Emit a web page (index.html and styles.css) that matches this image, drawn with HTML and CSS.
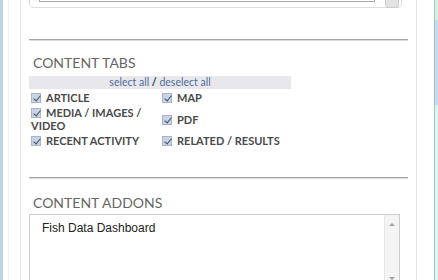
FILE: index.html
```html
<!DOCTYPE html>
<html lang="en">
<head>
    <meta charset="UTF-8">
    <meta name="viewport" content="width=device-width, initial-scale=1.0">
    <title>Content Settings</title>
    <link rel="stylesheet" href="styles.css">
</head>
<body>

    <div class="edge-left"></div>
    <div class="sheet">
        <div class="panel">

            <!-- tail of the box scrolled off the top -->
            <div class="top-box">
                <div class="top-input"></div>
                <div class="top-scroll"></div>
            </div>

            <hr class="divider first">

            <h2>Content Tabs</h2>
            <div class="select-bar">
                <a href="#">select all</a> <b>/</b> <a href="#">deselect all</a>
            </div>

            <div class="tab-grid">
                <label class="tab"><span class="check"></span>ARTICLE</label>
                <label class="tab"><span class="check"></span>MAP</label>
                <label class="tab"><span class="check"></span>MEDIA / IMAGES / VIDEO</label>
                <label class="tab"><span class="check"></span>PDF</label>
                <label class="tab"><span class="check"></span>RECENT ACTIVITY</label>
                <label class="tab"><span class="check"></span>RELATED / RESULTS</label>
            </div>

            <hr class="divider second">

            <h2 class="addons-title">Content Addons</h2>
            <div class="listbox">
                <div class="list-items">
                    <div class="list-item">Fish Data Dashboard</div>
                </div>
                <div class="list-scroll">
                    <span class="arrow up"></span>
                    <span class="arrow down"></span>
                </div>
            </div>

        </div>
    </div>
    <div class="gap-right"></div>
    <div class="edge-right"></div>

</body>
</html>
```

FILE: styles.css
```css
/* Global reset */
* {
    margin: 0;
    padding: 0;
    box-sizing: border-box;
}

body {
    font-family: Lato, "Open Sans", Arial, sans-serif;
    background-color: #ffffff;
    display: flex;
    width: 438px;
    height: 280px;
    overflow: hidden;
}

.edge-left {
    width: 3px;
    background-color: #bcd5e6;
}

.sheet {
    margin-left: 5px;
    border-left: 1px solid #f0f0f0;
    padding-left: 11px;
}

.panel {
    width: 397px;
    height: 280px;
    overflow: hidden;
    border-left: 1px solid #e6e6e6;
    border-right: 1px solid #e6e6e6;
    padding: 0 8px;
}

.gap-right {
    width: 17px;
}

.edge-right {
    width: 4px;
    border-left: 1px solid #8fcaca;
    background: linear-gradient(#dcefe2 0, #dcefe2 20px, #c7daf2 20px, #c7daf2 105px, #e3f2f2 105px);
}

/* top box */
.top-box {
    width: 373px;
    height: 22px;
    margin-top: -14px;
    border: 1px solid #dddddd;
    border-radius: 0 0 4px 4px;
    display: flex;
    align-items: flex-end;
    padding: 0 2px 0 9px;
}

.top-input {
    width: 338px;
    height: 16px;
    margin-bottom: 5px;
    border: 1px solid #a9a9a9;
    border-top: none;
}

.top-scroll {
    width: 14px;
    height: 21px;
    margin-left: 10px;
    margin-bottom: -1px;
    background-color: #e2e2e2;
    border: 1px solid #cccccc;
    border-radius: 0 0 3px 3px;
}

.divider {
    border: none;
    border-top: 1px solid #a3a3a3;
    border-bottom: 1px solid #dcdcdc;
}

    .divider.first {
        margin-top: 31px;
    }

    .divider.second {
        margin-top: 30px;
    }

h2 {
    font-size: 14px;
    font-weight: normal;
    text-transform: uppercase;
    color: #666666;
    line-height: 17px;
    margin-top: 13px;
    padding-left: 4px;
}

    h2.addons-title {
        margin-top: 15px;
    }

.select-bar {
    width: 262px;
    height: 13px;
    margin-top: 5px;
    background-color: #e8e8ec;
    text-align: center;
    font-size: 10.5px;
    line-height: 13px;
    color: #333333;
}

    .select-bar a {
        color: #4c6c9a;
        text-decoration: none;
    }

.tab-grid {
    display: grid;
    grid-template-columns: 131px auto;
    row-gap: 2px;
    align-items: center;
    margin-top: 2px;
    padding-left: 2px;
}

.tab {
    font-size: 11px;
    font-weight: bold;
    color: #4a4a4a;
    line-height: 13px;
    padding-right: 10px;
}

.check {
    display: inline-block;
    width: 10px;
    height: 10px;
    margin-right: 5px;
    vertical-align: -1px;
    background-color: #c9d3e3;
    border: 1px solid #a8b4c8;
    position: relative;
}

    .check::after {
        content: "";
        position: absolute;
        left: 3px;
        top: 0px;
        width: 3px;
        height: 6px;
        border-right: 1.5px solid #3f4f6a;
        border-bottom: 1.5px solid #3f4f6a;
        transform: rotate(40deg);
    }

/* addons list */
.listbox {
    width: 371px;
    height: 70px;
    margin-top: 3px;
    border: 1px solid #cccccc;
    display: flex;
}

.list-items {
    flex: 1;
    padding: 6px 0 0 12px;
}

.list-item {
    font-family: "Liberation Sans", Arial, sans-serif;
    font-size: 12px;
    color: #222222;
    line-height: 14px;
}

.list-scroll {
    width: 15px;
    background-color: #f4f4f4;
    border-left: 1px solid #e6e6e6;
    display: flex;
    flex-direction: column;
    justify-content: space-between;
    align-items: center;
    padding: 8px 0 3px;
}

.arrow {
    width: 0;
    height: 0;
    border-left: 3px solid transparent;
    border-right: 3px solid transparent;
}

    .arrow.up {
        border-bottom: 3px solid #a0a0a0;
    }

    .arrow.down {
        border-top: 3px solid #a0a0a0;
    }
```
